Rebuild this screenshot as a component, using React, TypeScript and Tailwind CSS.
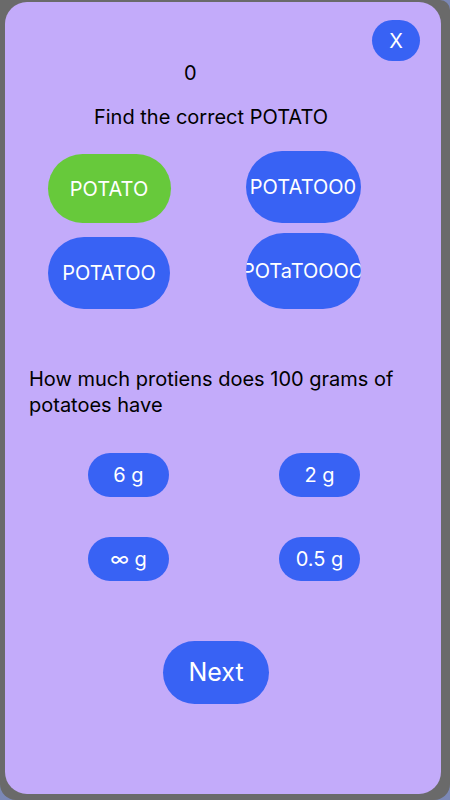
import React, { useState } from 'react';

const potatoes = ['POTATO', 'POTATOO0', 'POTATOO', 'POTaTOOOO'];
const grams = ['6 g', '2 g', '∞ g', '0.5 g'];

export default function App() {
  const [score] = useState<number>(0);

  return (
    <div className="w-[450px] h-[800px] bg-[#7b88b6] overflow-hidden" style={{ fontFamily: 'Inter, "Noto Sans", sans-serif' }}>
      <div className="w-[450px] h-[800px] bg-[#6a6a6a] rounded-tr-[10px] rounded-b-[16px] pt-[2px] pl-[5px]">
        <div className="w-[436px] h-[792px] bg-[#c3abfa] rounded-[22px] flex flex-col">

          <div className="flex justify-end pt-[18px] pr-[21px]">
            <button className="w-[48px] h-[41px] rounded-full bg-[#3862f4] text-white text-[20px] leading-none">
              X
            </button>
          </div>

          <div className="pl-[179px] mt-[1px] text-[20px] leading-[22px] text-black">{score}</div>

          <div className="w-[412px] text-center mt-[22px] text-[20px] leading-[22px] text-black">
            Find the correct POTATO
          </div>

          <div className="grid grid-cols-[194px_194px] grid-rows-[72px_76px] gap-y-[10px] ml-[7px] mt-[23px]">
            {potatoes.map((p, i) => (
              <div key={p} className="flex items-center justify-center">
                <button
                  className={
                    i === 0
                      ? 'w-[123px] h-[69px] mt-[3px] rounded-full bg-[#67c93b] text-white text-[20px] overflow-hidden whitespace-nowrap'
                      : i === 1
                      ? 'w-[115px] h-[72px] rounded-full bg-[#3862f4] text-white text-[20px] overflow-hidden whitespace-nowrap'
                      : i === 2
                      ? 'w-[122px] h-[72px] mt-[4px] rounded-full bg-[#3862f4] text-white text-[20px] overflow-hidden whitespace-nowrap'
                      : 'w-[115px] h-[76px] rounded-full bg-[#3862f4] text-white text-[20px] overflow-hidden whitespace-nowrap flex items-center justify-center'
                  }
                >
                  {p}
                </button>
              </div>
            ))}
          </div>

          <p className="mt-[57px] pl-[24px] pr-[20px] text-[20px] leading-[26px] text-black">
            How much protiens does 100 grams of potatoes have
          </p>

          <div className="grid grid-cols-[191px_191px] gap-y-[40px] ml-[28px] mt-[35px]">
            {grams.map((g) => (
              <div key={g} className="flex justify-center">
                <button className="w-[81px] h-[44px] rounded-full bg-[#3862f4] text-white text-[20px]">
                  {g}
                </button>
              </div>
            ))}
          </div>

          <div className="w-[422px] flex justify-center mt-[60px]">
            <button className="w-[106px] h-[63px] rounded-full bg-[#3862f4] text-white text-[25px]">
              Next
            </button>
          </div>

        </div>
      </div>
    </div>
  );
}
